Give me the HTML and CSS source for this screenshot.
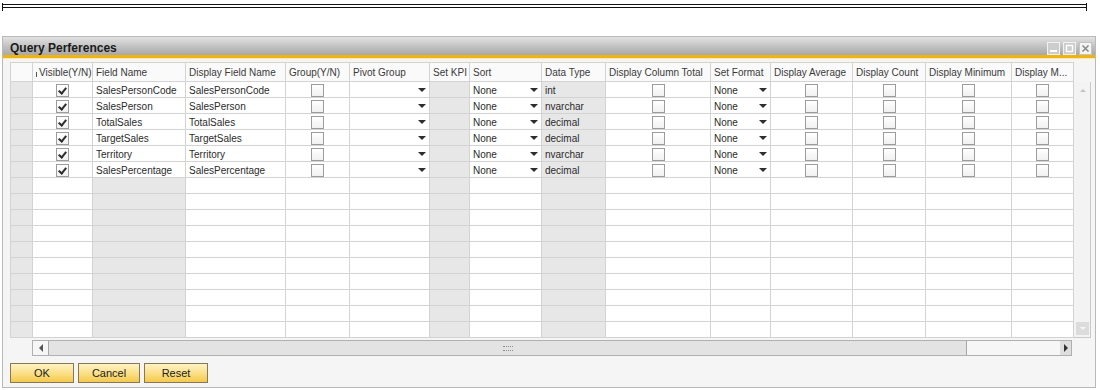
FILE: index.html
```html
<!DOCTYPE html>
<html lang="en">

<head>
    <meta charset="UTF-8">
    <meta name="viewport" content="width=device-width, initial-scale=1.0">
    <title>Query Perferences</title>
    <link rel="stylesheet" href="styles.css">
</head>

<body>
    <div class="ruler"></div>

    <div class="window">
        <div class="titlebar">
            <span class="title">Query Perferences</span>
            <div class="win-buttons">
                <span class="win-btn">
                    <svg width="11" height="11" viewBox="0 0 11 11"><rect x="2" y="7" width="7" height="2" fill="#fff"/></svg>
                </span>
                <span class="win-btn">
                    <svg width="11" height="11" viewBox="0 0 11 11"><rect x="2.5" y="2.5" width="6" height="6" fill="none" stroke="#fff" stroke-width="1.4"/></svg>
                </span>
                <span class="win-btn close">
                    <svg width="11" height="11" viewBox="0 0 11 11"><path d="M2.5 2.5 L8.5 8.5 M8.5 2.5 L2.5 8.5" stroke="#8a8a8a" stroke-width="1.6"/></svg>
                </span>
            </div>
        </div>

        <div class="content">
            <div class="grid-area">
                <table class="grid">
                    <colgroup>
                        <col style="width:22px"><col style="width:60px"><col style="width:93px"><col style="width:100px">
                        <col style="width:64px"><col style="width:80px"><col style="width:40px"><col style="width:72px">
                        <col style="width:64px"><col style="width:105px"><col style="width:60px"><col style="width:82px">
                        <col style="width:73px"><col style="width:86px"><col style="width:62px">
                    </colgroup>
                    <thead>
                        <tr>
                            <th></th>
                            <th><span class="tick"></span>Visible(Y/N)</th>
                            <th>Field Name</th>
                            <th>Display Field Name</th>
                            <th>Group(Y/N)</th>
                            <th>Pivot Group</th>
                            <th>Set KPI</th>
                            <th>Sort</th>
                            <th>Data Type</th>
                            <th>Display Column Total</th>
                            <th>Set Format</th>
                            <th>Display Average</th>
                            <th>Display Count</th>
                            <th>Display Minimum</th>
                            <th>Display M...</th>
                        </tr>
                    </thead>
                    <tbody>
                        <tr>
                            <td></td>
                            <td class="c"><span class="cb checked"></span></td>
                            <td>SalesPersonCode</td>
                            <td>SalesPersonCode</td>
                            <td class="c"><span class="cb"></span></td>
                            <td><span class="combo"><span></span><i class="arrow"></i></span></td>
                            <td></td>
                            <td><span class="combo"><span>None</span><i class="arrow"></i></span></td>
                            <td>int</td>
                            <td class="c"><span class="cb"></span></td>
                            <td><span class="combo"><span>None</span><i class="arrow"></i></span></td>
                            <td class="c"><span class="cb"></span></td>
                            <td class="c"><span class="cb"></span></td>
                            <td class="c"><span class="cb"></span></td>
                            <td class="c"><span class="cb"></span></td>
                        </tr>
                        <tr>
                            <td></td>
                            <td class="c"><span class="cb checked"></span></td>
                            <td>SalesPerson</td>
                            <td>SalesPerson</td>
                            <td class="c"><span class="cb"></span></td>
                            <td><span class="combo"><span></span><i class="arrow"></i></span></td>
                            <td></td>
                            <td><span class="combo"><span>None</span><i class="arrow"></i></span></td>
                            <td>nvarchar</td>
                            <td class="c"><span class="cb"></span></td>
                            <td><span class="combo"><span>None</span><i class="arrow"></i></span></td>
                            <td class="c"><span class="cb"></span></td>
                            <td class="c"><span class="cb"></span></td>
                            <td class="c"><span class="cb"></span></td>
                            <td class="c"><span class="cb"></span></td>
                        </tr>
                        <tr>
                            <td></td>
                            <td class="c"><span class="cb checked"></span></td>
                            <td>TotalSales</td>
                            <td>TotalSales</td>
                            <td class="c"><span class="cb"></span></td>
                            <td><span class="combo"><span></span><i class="arrow"></i></span></td>
                            <td></td>
                            <td><span class="combo"><span>None</span><i class="arrow"></i></span></td>
                            <td>decimal</td>
                            <td class="c"><span class="cb"></span></td>
                            <td><span class="combo"><span>None</span><i class="arrow"></i></span></td>
                            <td class="c"><span class="cb"></span></td>
                            <td class="c"><span class="cb"></span></td>
                            <td class="c"><span class="cb"></span></td>
                            <td class="c"><span class="cb"></span></td>
                        </tr>
                        <tr>
                            <td></td>
                            <td class="c"><span class="cb checked"></span></td>
                            <td>TargetSales</td>
                            <td>TargetSales</td>
                            <td class="c"><span class="cb"></span></td>
                            <td><span class="combo"><span></span><i class="arrow"></i></span></td>
                            <td></td>
                            <td><span class="combo"><span>None</span><i class="arrow"></i></span></td>
                            <td>decimal</td>
                            <td class="c"><span class="cb"></span></td>
                            <td><span class="combo"><span>None</span><i class="arrow"></i></span></td>
                            <td class="c"><span class="cb"></span></td>
                            <td class="c"><span class="cb"></span></td>
                            <td class="c"><span class="cb"></span></td>
                            <td class="c"><span class="cb"></span></td>
                        </tr>
                        <tr>
                            <td></td>
                            <td class="c"><span class="cb checked"></span></td>
                            <td>Territory</td>
                            <td>Territory</td>
                            <td class="c"><span class="cb"></span></td>
                            <td><span class="combo"><span></span><i class="arrow"></i></span></td>
                            <td></td>
                            <td><span class="combo"><span>None</span><i class="arrow"></i></span></td>
                            <td>nvarchar</td>
                            <td class="c"><span class="cb"></span></td>
                            <td><span class="combo"><span>None</span><i class="arrow"></i></span></td>
                            <td class="c"><span class="cb"></span></td>
                            <td class="c"><span class="cb"></span></td>
                            <td class="c"><span class="cb"></span></td>
                            <td class="c"><span class="cb"></span></td>
                        </tr>
                        <tr>
                            <td></td>
                            <td class="c"><span class="cb checked"></span></td>
                            <td>SalesPercentage</td>
                            <td>SalesPercentage</td>
                            <td class="c"><span class="cb"></span></td>
                            <td><span class="combo"><span></span><i class="arrow"></i></span></td>
                            <td></td>
                            <td><span class="combo"><span>None</span><i class="arrow"></i></span></td>
                            <td>decimal</td>
                            <td class="c"><span class="cb"></span></td>
                            <td><span class="combo"><span>None</span><i class="arrow"></i></span></td>
                            <td class="c"><span class="cb"></span></td>
                            <td class="c"><span class="cb"></span></td>
                            <td class="c"><span class="cb"></span></td>
                            <td class="c"><span class="cb"></span></td>
                        </tr>
                        <!-- empty rows -->
                        <tr class="empty"><td></td><td></td><td></td><td></td><td></td><td></td><td></td><td></td><td></td><td></td><td></td><td></td><td></td><td></td><td></td></tr>
                        <tr class="empty"><td></td><td></td><td></td><td></td><td></td><td></td><td></td><td></td><td></td><td></td><td></td><td></td><td></td><td></td><td></td></tr>
                        <tr class="empty"><td></td><td></td><td></td><td></td><td></td><td></td><td></td><td></td><td></td><td></td><td></td><td></td><td></td><td></td><td></td></tr>
                        <tr class="empty"><td></td><td></td><td></td><td></td><td></td><td></td><td></td><td></td><td></td><td></td><td></td><td></td><td></td><td></td><td></td></tr>
                        <tr class="empty"><td></td><td></td><td></td><td></td><td></td><td></td><td></td><td></td><td></td><td></td><td></td><td></td><td></td><td></td><td></td></tr>
                        <tr class="empty"><td></td><td></td><td></td><td></td><td></td><td></td><td></td><td></td><td></td><td></td><td></td><td></td><td></td><td></td><td></td></tr>
                        <tr class="empty"><td></td><td></td><td></td><td></td><td></td><td></td><td></td><td></td><td></td><td></td><td></td><td></td><td></td><td></td><td></td></tr>
                        <tr class="empty"><td></td><td></td><td></td><td></td><td></td><td></td><td></td><td></td><td></td><td></td><td></td><td></td><td></td><td></td><td></td></tr>
                        <tr class="empty"><td></td><td></td><td></td><td></td><td></td><td></td><td></td><td></td><td></td><td></td><td></td><td></td><td></td><td></td><td></td></tr>
                        <tr class="empty"><td></td><td></td><td></td><td></td><td></td><td></td><td></td><td></td><td></td><td></td><td></td><td></td><td></td><td></td><td></td></tr>
                    </tbody>
                </table>

                <div class="vscroll">
                    <span class="vbtn up"><i class="tri-up"></i></span>
                    <span class="vbtn down"><i class="tri-down"></i></span>
                </div>
            </div>

            <div class="hscroll">
                <span class="hbtn"><i class="tri-left"></i></span>
                <span class="thumb"><span class="grip"></span></span>
                <span class="track"></span>
                <span class="hbtn right"><i class="tri-right"></i></span>
            </div>

            <div class="buttons">
                <button class="btn">OK</button>
                <button class="btn cancel">Cancel</button>
                <button class="btn">Reset</button>
            </div>
        </div>
    </div>
</body>

</html>
```

FILE: styles.css
```css
body {
    margin: 0;
    background-color: #fff;
    font-family: 'Liberation Sans', Arial, sans-serif;
    font-size: 10px;
    color: #2b2b2b;
}

.ruler {
    position: relative;
    margin: 4px 0 0 2px;
    width: 1083px;
    height: 2px;
    border: 1px solid #111;
}

.ruler::before,
.ruler::after {
    content: "";
    position: absolute;
    top: -2px;
    width: 1px;
    height: 8px;
    background-color: #111;
}

.ruler::before {
    left: -1px;
}

.ruler::after {
    right: -1px;
}

.window {
    margin: 28px 0 0 2px;
    width: 1092px;
    height: 350px;
    border: 1px solid #b9b9b9;
    background-color: #f5f5f5;
}

.titlebar {
    height: 18px;
    display: flex;
    align-items: center;
    justify-content: space-between;
    padding: 0 3px 0 7px;
    background: linear-gradient(#e2e2e2, #bdbdbd 60%, #a9a9a9);
    border-bottom: 3px solid #efb40f;
    box-shadow: 0 1px 0 #f8e7b0;
}

.title {
    margin-top: 3px;
    font-size: 12px;
    font-weight: bold;
    color: #1b1b1b;
}

.win-buttons {
    display: flex;
    gap: 3px;
    margin-top: 4px;
}

.win-btn {
    width: 11px;
    height: 11px;
    border: 1px solid #f2f2f2;
    background-color: #cdcdcd;
    display: flex;
}

.win-btn.close {
    background-color: #f4f4f4;
    border-color: #c4c4c4;
}

.content {
    padding: 4px 0 0 7px;
}

.grid-area {
    display: flex;
    align-items: flex-start;
}

.grid {
    width: 1063px;
    table-layout: fixed;
    border-collapse: collapse;
    background-color: #fff;
}

.grid th,
.grid td {
    border: 1px solid #d3d3d3;
    padding: 1px 0 0 3px;
    text-align: left;
    white-space: nowrap;
    overflow: hidden;
    font-weight: normal;
}

.grid th {
    height: 17px;
    background-color: #fafafa;
    color: #3a3a3a;
}

.grid td {
    height: 14px;
}

.grid td.c {
    text-align: center;
    padding: 1px 0 0 0;
}

.tick {
    display: inline-block;
    width: 1px;
    height: 5px;
    background-color: #555;
    margin-right: 2px;
    vertical-align: -1px;
}

.grid tbody td:nth-child(1),
.grid tbody td:nth-child(7),
.grid tbody td:nth-child(9),
.grid tbody tr.empty td:nth-child(3) {
    background-color: #e7e7e7;
}

.cb {
    display: inline-block;
    width: 11px;
    height: 11px;
    border: 1px solid #9c9c9c;
    background: linear-gradient(#fff, #f1f1f1);
    vertical-align: middle;
    box-sizing: content-box;
    position: relative;
}

.cb.checked::after {
    content: "";
    position: absolute;
    left: 3px;
    top: 1px;
    width: 3px;
    height: 6px;
    border: solid #2a2a2a;
    border-width: 0 2px 2px 0;
    transform: rotate(40deg);
}

.combo {
    display: flex;
    align-items: center;
    justify-content: space-between;
    padding-right: 3px;
}

.arrow {
    width: 0;
    height: 0;
    border-left: 4px solid transparent;
    border-right: 4px solid transparent;
    border-top: 4px solid #2d2d2d;
}

.vscroll {
    margin-top: 20px;
    width: 16px;
    height: 255px;
    border: solid #c9c9c9;
    border-width: 0 1px 1px 0;
    background-color: #f3f3f3;
    display: flex;
    flex-direction: column;
    justify-content: space-between;
    align-items: flex-end;
}

.vbtn {
    width: 13px;
    height: 13px;
    margin: 2px 1px 2px 0;
    display: flex;
    align-items: center;
    justify-content: center;
}

.vbtn.down {
    background-color: #dcdcdc;
}

.tri-up {
    border-left: 3px solid transparent;
    border-right: 3px solid transparent;
    border-bottom: 3px solid #c4c4c4;
}

.tri-down {
    border-left: 3px solid transparent;
    border-right: 3px solid transparent;
    border-top: 3px solid #f6f6f6;
}

.hscroll {
    margin: 2px 0 0 22px;
    width: 1038px;
    height: 14px;
    border: 1px solid #b0b0b0;
    display: flex;
    background-color: #f6f6f6;
}

.hbtn {
    width: 15px;
    display: flex;
    align-items: center;
    justify-content: center;
}

.hbtn.right {
    width: 11px;
    background-color: #dedede;
}

.tri-left {
    border-top: 4px solid transparent;
    border-bottom: 4px solid transparent;
    border-right: 4px solid #555;
}

.tri-right {
    border-top: 4px solid transparent;
    border-bottom: 4px solid transparent;
    border-left: 4px solid #333;
}

.thumb {
    width: 917px;
    border: solid #a8a8a8;
    border-width: 0 1px 0 1px;
    background-color: #e3e3e3;
    display: flex;
    align-items: center;
    justify-content: center;
}

.grip {
    width: 10px;
    height: 3px;
    border-top: 1px dotted #8c8c8c;
    border-bottom: 1px dotted #8c8c8c;
}

.track {
    flex: 1;
}

.buttons {
    display: flex;
    gap: 4px;
    margin-top: 7px;
}

.btn {
    width: 64px;
    height: 20px;
    padding: 0;
    border: 1px solid #867a56;
    background: linear-gradient(#fff3c4, #fbe08a 50%, #f5c94a);
    font-family: 'Liberation Sans', Arial, sans-serif;
    font-size: 11px;
    color: #222;
}

.btn.cancel {
    width: 62px;
}
```
